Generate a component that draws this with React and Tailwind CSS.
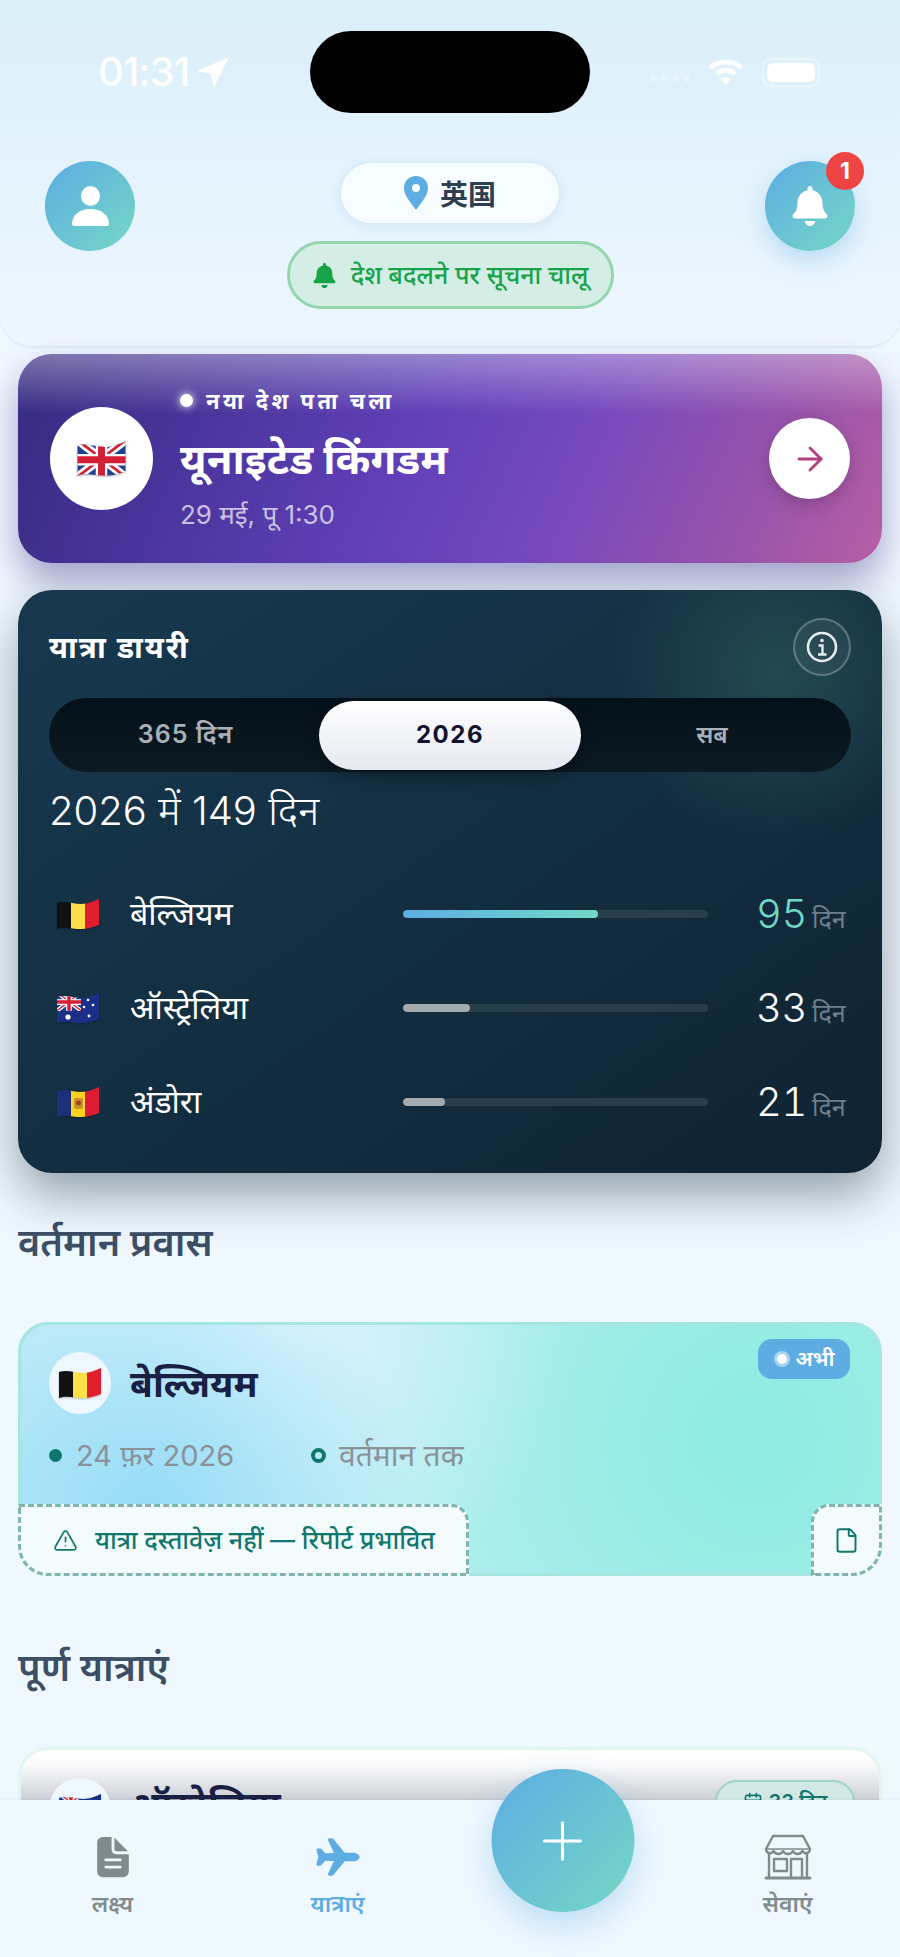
import React from 'react';
import { ArrowRight, TriangleAlert, File, Plus, Calendar } from 'lucide-react';
import { IoDocumentText, IoAirplane } from 'react-icons/io5';
import { FaBell } from 'react-icons/fa';

const WAVE = 'M0 5C8 2 16 6 24 6C31 6 37 3 42 1V27C37 29 31 31 24 31C16 31 8 28 0 31Z';

function Flag({ id, w = 42, h = 32, children }) {
  return (
    <svg width={w} height={h} viewBox="0 0 42 32" className="shrink-0" style={{ filter: 'drop-shadow(0 1px 1px rgba(0,0,0,.25))' }}>
      <defs><clipPath id={id}><path d={WAVE} /></clipPath></defs>
      <g clipPath={`url(#${id})`}>{children}</g>
    </svg>
  );
}
const Belgium = ({ id, w, h }) => (
  <Flag id={id} w={w} h={h}>
    <rect x="0" width="14" height="32" fill="#111" /><rect x="14" width="14" height="32" fill="#fde047" /><rect x="28" width="14" height="32" fill="#e11d2e" />
  </Flag>
);
const Andorra = ({ id, w, h }) => (
  <Flag id={id} w={w} h={h}>
    <rect x="0" width="14" height="32" fill="#1e2f7a" /><rect x="14" width="14" height="32" fill="#fbd21e" /><rect x="28" width="14" height="32" fill="#dd1c34" />
    <rect x="17" y="12" width="9" height="11" rx="2" fill="#c9902e" /><circle cx="21.5" cy="17" r="2.5" fill="#a3431f" />
  </Flag>
);
const UKShapes = () => (
  <>
    <rect width="42" height="32" fill="#1f3f8f" />
    <path d="M0 0L42 32M42 0L0 32" stroke="#fff" strokeWidth="7" />
    <path d="M0 0L42 32M42 0L0 32" stroke="#d31f36" strokeWidth="2.4" />
    <path d="M21 0V32M0 17H42" stroke="#fff" strokeWidth="10" />
    <path d="M21 0V32M0 17H42" stroke="#d31f36" strokeWidth="6" />
  </>
);
const UK = ({ id, w, h }) => <Flag id={id} w={w} h={h}><UKShapes /></Flag>;
const Australia = ({ id, w, h }) => (
  <Flag id={id} w={w} h={h}>
    <rect width="42" height="32" fill="#1c2f87" />
    <svg x="0" y="0" width="24" height="19" viewBox="0 0 42 32"><UKShapes /></svg>
    <circle cx="11" cy="25" r="2.6" fill="#fff" /><circle cx="31" cy="8" r="1.3" fill="#fff" /><circle cx="36" cy="13" r="1.3" fill="#fff" /><circle cx="27" cy="15" r="1.3" fill="#fff" /><circle cx="32" cy="24" r="1.4" fill="#fff" />
  </Flag>
);

const Row = ({ flag, name, fill, val, active }) => (
  <div className="flex items-center h-[94px]">
    <div className="w-[40px] ml-[9px] mr-[32px] flex justify-center">{flag}</div>
    <div className="w-[273px] text-[32px] text-white leading-none">{name}</div>
    <div className="w-[305px] h-[8px] rounded-full bg-[#293e4d] overflow-hidden">
      <div className={active ? 'h-full rounded-full bg-gradient-to-r from-[#5dade2] to-[#72d8c6]' : 'h-full rounded-full bg-[#a3abb1]'} style={{ width: fill }} />
    </div>
    <div className="flex items-baseline ml-[48px]">
      <span className={active ? 'w-[47px] text-[40px] font-light leading-none tabular-nums tracking-[-0.5px] text-[#72d8c6]' : 'w-[47px] text-[40px] font-light leading-none tabular-nums tracking-[-0.5px] text-white'}>{val}</span>
      <span className="ml-[9px] text-[25px] leading-none text-[#6d7f8b]">दिन</span>
    </div>
  </div>
);

const GRAD = 'bg-gradient-to-br from-[#5dade2] to-[#76d7c4]';

export default function App() {
  return (
    <div className="relative w-[900px] h-[1957px] overflow-hidden bg-[#f0f8ff] text-[#2c3e50] [font-family:Inter,'Noto_Sans','Noto_Sans_Devanagari',sans-serif]">
      {/* header */}
      <header className="h-[346px] rounded-b-[32px] bg-gradient-to-b from-[#daeff9] to-[#eff7ff] shadow-[0_1px_3px_rgba(90,110,170,0.15)]">
        <div className="flex items-center pt-[31px] pl-[98px] h-[113px]">
          <div className="flex items-center gap-[8px] w-[212px] text-white">
            <span className="text-[40px] font-medium leading-none tracking-[-1px]">01:31</span>
            <svg width="32" height="30" viewBox="0 0 30 28" fill="#fff" stroke="#fff" strokeWidth="1" strokeLinejoin="round"><path d="M29 1L1 13L13 15L16 27Z" /></svg>
          </div>
          <div className="w-[280px] h-[82px] rounded-[41px] bg-black" />
          <div className="flex items-center w-[230px] justify-end text-white">
            <div className="flex gap-[4px] opacity-30 mt-[12px] mr-[17px]">
              <span className="w-[7px] h-[7px] rounded-full bg-white" /><span className="w-[7px] h-[7px] rounded-full bg-white" /><span className="w-[7px] h-[7px] rounded-full bg-white" /><span className="w-[7px] h-[7px] rounded-full bg-white" />
            </div>
            <svg width="38" height="28" viewBox="0 0 38 28" fill="none" stroke="#fff" strokeWidth="5" className="mr-[17px]"><path d="M3 10C12 2 26 2 35 10" /><path d="M10 16C15 11 23 11 28 16" /><path d="M19 27L14 21C17 19 21 19 24 21Z" fill="#fff" stroke="none" /></svg>
            <div className="w-[58px] h-[29px] rounded-[9px] border-2 border-white/40 p-[3px]">
              <div className="w-full h-full rounded-[6px] bg-white" />
            </div>
          </div>
        </div>
        <div className="flex items-start justify-between px-[45px] mt-[48px]">
          <div className={`w-[90px] h-[90px] rounded-full ${GRAD} flex items-center justify-center`}>
            <svg width="37" height="40" viewBox="0 0 37 40" fill="#fff"><ellipse cx="18.5" cy="10" rx="9.5" ry="10" /><path d="M0 38C0 29 8 23 18.5 23S37 29 37 38c0 1-1 2-2 2H2c-1 0-2-1-2-2z" /></svg>
          </div>
          <div className="flex flex-col items-center gap-[16px]">
            <div className="w-[222px] h-[64px] rounded-full bg-[#f7fcff] border-2 border-[#d9eaf8] shadow-[0_4px_12px_rgba(93,173,226,0.12)] flex items-center justify-center gap-[12px]">
              <svg width="24" height="34" viewBox="0 0 24 34"><path fillRule="evenodd" fill="#5dade2" d="M12 0C5 0 0 5 0 12c0 8 8 16 12 22 4-6 12-14 12-22C24 5 19 0 12 0zm0 8a4 4 0 110 8 4 4 0 010-8z" /></svg>
              <span className="text-[28px] font-semibold text-[#2c3e50] [font-family:'Noto_Sans_CJK_SC',sans-serif]">英国</span>
            </div>
            <div className="w-[327px] h-[68px] rounded-full bg-[#d4eee6] border-[3px] border-[#94d5ae] flex items-center justify-center gap-[14px]">
              <FaBell className="text-[#16a34a] text-[25px]" />
              <span className="text-[25px] font-medium text-[#16a34a] leading-none">देश बदलने पर सूचना चालू</span>
            </div>
          </div>
          <div className={`relative w-[90px] h-[90px] rounded-full ${GRAD} flex items-center justify-center shadow-[0_10px_24px_rgba(93,173,226,0.35)]`}>
            <FaBell className="text-white text-[40px]" />
            <div className="absolute -top-[9px] -right-[9px] w-[38px] h-[38px] rounded-full bg-[#ef4444] text-white text-[23px] font-bold flex items-center justify-center">1</div>
          </div>
        </div>
      </header>

      <main className="px-[18px]">
        {/* detection card */}
        <section className="relative mt-[8px] h-[209px] rounded-[34px] bg-[linear-gradient(115deg,#362a80_0%,#6040b8_45%,#7548be_62%,#9a54aa_85%,#b75fa5_100%)] shadow-[0_18px_36px_rgba(49,46,129,0.42)]">
          <div className="absolute inset-x-0 top-0 h-[60px] rounded-t-[34px] bg-gradient-to-b from-white/35 to-transparent" />
          <div className="relative h-full flex items-center pl-[32px] pr-[32px]">
            <div className="w-[103px] h-[103px] rounded-full bg-white flex items-center justify-center shrink-0"><UK id="f-uk" w={49} h={37} /></div>
            <div className="ml-[27px] flex-1 text-white">
              <div className="flex items-center gap-[13px] text-[22px] font-bold leading-none tracking-[3.5px]">
                <span className="w-[13px] h-[13px] rounded-full bg-white shadow-[0_0_8px_white]" />नया देश पता चला
              </div>
              <div className="text-[42px] font-bold leading-none mt-[26px]">यूनाइटेड किंगडम</div>
              <div className="text-[26px] leading-none mt-[22px] text-white/70">29 मई, पू 1:30</div>
            </div>
            <div className="w-[81px] h-[81px] rounded-full bg-white flex items-center justify-center shadow-[0_6px_16px_rgba(0,0,0,0.18)]">
              <ArrowRight size={38} strokeWidth={1.8} className="text-[#b0407f]" />
            </div>
          </div>
        </section>

        {/* diary card */}
        <section className="relative mt-[27px] h-[583px] rounded-[34px] overflow-hidden px-[31px] bg-[radial-gradient(circle_170px_at_88%_14%,#234a50_0%,rgba(35,74,80,0)_100%),linear-gradient(145deg,#17394f_0%,#0f2333_100%)] shadow-[0_22px_50px_rgba(15,35,51,0.42)]">
          <div className="flex items-center justify-between pt-[28px]">
            <div className="text-[30px] font-bold text-white tracking-[2px] leading-none">यात्रा डायरी</div>
            <div className="w-[58px] h-[58px] rounded-full border-2 border-white/25 bg-white/5 flex items-center justify-center">
              <svg width="32" height="32" viewBox="0 0 32 32" fill="none" stroke="#e6ebee" strokeWidth="2.6"><circle cx="16" cy="16" r="14" /><path d="M12.5 14.5H16.5V23M12 23.5H20.5" strokeWidth="2.4" /><circle cx="16" cy="9.5" r="1.8" fill="#e6ebee" stroke="none" /></svg>
            </div>
          </div>
          <div className="mt-[22px] h-[74px] rounded-full bg-[linear-gradient(180deg,#05111a,#0c1a22)] flex items-center px-[3px] text-center">
            <div className="w-[267px] text-[25px] font-semibold text-[#a9b1b6] tracking-[1px]">365 दिन</div>
            <div className="w-[262px] h-[69px] rounded-full bg-gradient-to-b from-white to-[#e6e9f2] text-[#12122e] text-[24px] font-bold tracking-[1.5px] flex items-center justify-center shadow-[0_6px_18px_rgba(0,0,0,0.35)]">2026</div>
            <div className="flex-1 text-[24px] font-semibold text-[#a9b1b6] pr-[5px]">सब</div>
          </div>
          <div className="mt-[15px] text-[40px] font-light text-white leading-[48px]">2026 में 149 दिन</div>
          <div className="mt-[32px]">
            <Row flag={<Belgium id="f-be1" />} name="बेल्जियम" fill="195px" val="95" active />
            <Row flag={<Australia id="f-au1" />} name="ऑस्ट्रेलिया" fill="67px" val="33" />
            <Row flag={<Andorra id="f-ad1" />} name="अंडोरा" fill="42px" val="21" />
          </div>
        </section>

        <h2 className="mt-[46px] text-[38px] font-semibold leading-[46px] text-[#3d4f66]">वर्तमान प्रवास</h2>

        {/* current trip */}
        <section className="relative mt-[57px] h-[254px] rounded-[30px] border-[3px] border-[#a4e6e0] flex flex-col justify-between bg-[radial-gradient(circle_at_15%_75%,#96dcf7_0%,rgba(150,220,247,0)_36%),radial-gradient(circle_at_30%_0%,#dcf3fd_0%,rgba(220,243,253,0)_45%),radial-gradient(circle_at_85%_45%,#8cebe2_0%,rgba(140,235,226,0)_55%),linear-gradient(100deg,#c2ecf8_0%,#aef0ea_100%)]">
          <div className="relative px-[28px] pt-[27px]">
            <div className="flex items-center gap-[19px]">
              <div className="w-[62px] h-[62px] rounded-full bg-[#f0f8ff] flex items-center justify-center"><Belgium id="f-be2" w={42} h={32} /></div>
              <div className="text-[37px] font-bold text-[#1a1f44] leading-none">बेल्जियम</div>
            </div>
            <div className="flex items-center mt-[26px] text-[29px] leading-none text-[#8a9298]">
              <span className="w-[13px] h-[13px] rounded-full bg-[#0f766e] mr-[14px]" />
              <span className="w-[235px]">24 फ़र 2026</span>
              <span className="w-[15px] h-[15px] rounded-full border-[4px] border-[#0f766e] mr-[13px]" />
              <span className="text-[30px]">वर्तमान तक</span>
            </div>
            <div className="absolute top-[14px] right-[29px] w-[92px] h-[40px] rounded-[14px] bg-[#5dade2] flex items-center justify-center gap-[6px] text-white text-[21px] font-semibold">
              <span className="w-[16px] h-[16px] rounded-full bg-white border-[3px] border-[#a8d2f2]" />अभी
            </div>
          </div>
          <div className="flex justify-between items-stretch h-[72px] -mx-[3px] -mb-[3px]">
            <div className="w-[451px] bg-[#f3fbfd] border-[3px] border-dashed border-[#7fb5ae] rounded-tr-[18px] rounded-bl-[30px] flex items-center pl-[32px] gap-[17px] text-[#0f766e]">
              <TriangleAlert size={25} strokeWidth={1.6} />
              <span className="text-[25px] font-medium leading-none">यात्रा दस्तावेज़ नहीं — रिपोर्ट प्रभावित</span>
            </div>
            <div className="w-[71px] bg-[#f3fbfd] border-[3px] border-dashed border-[#7fb5ae] rounded-tl-[18px] rounded-br-[30px] flex items-center justify-center text-[#0f766e]">
              <File size={27} strokeWidth={1.7} />
            </div>
          </div>
        </section>

        <h2 className="mt-[68px] text-[38px] font-semibold leading-[46px] text-[#3d4f66]">पूर्ण यात्राएं</h2>

        {/* completed trip */}
        <section className="relative mt-[57px] h-[200px] rounded-[30px] border-[3px] border-[#e2f5f3] px-[28px] pt-[28px] bg-[linear-gradient(180deg,#ffffff_0px,#fbfbfc_15px,#c8ccd2_52px)]">
          <div className="flex items-center gap-[19px]">
            <div className="w-[62px] h-[62px] rounded-full bg-[#f0f8ff] flex items-center justify-center"><Australia id="f-au2" w={42} h={32} /></div>
            <div className="text-[37px] font-bold text-[#1a1f44] leading-none pb-[10px]">ऑस्ट्रेलिया</div>
          </div>
          <div className="absolute top-[30px] right-[24px] w-[140px] h-[44px] rounded-[22px] bg-[#d2e8e4] border-2 border-[#9fd3cb] flex items-center justify-center gap-[6px] text-[#0f766e] text-[20px] font-semibold">
            <Calendar size={20} />33 दिन
          </div>
        </section>
      </main>

      {/* bottom nav */}
      <nav className="absolute left-0 right-0 bottom-0 h-[157px] bg-[#f0f8ff] grid grid-cols-4 pt-[34px] shadow-[0_-1px_2px_rgba(40,60,90,0.05)]">
        <div className="flex flex-col items-center text-[#7f8c8d]">
          <IoDocumentText className="text-[46px] h-[46px]" />
          <span className="mt-[10px] text-[23px] font-semibold leading-[28px]">लक्ष्य</span>
        </div>
        <div className="flex flex-col items-center text-[#5dade2]">
          <IoAirplane className="text-[48px] h-[46px]" />
          <span className="mt-[10px] text-[23px] font-semibold leading-[28px]">यात्राएं</span>
        </div>
        <div className="relative">
          <div className={`absolute left-1/2 -translate-x-1/2 -top-[65px] w-[143px] h-[143px] rounded-full ${GRAD} flex items-center justify-center shadow-[0_14px_34px_rgba(93,173,226,0.35)]`}>
            <Plus size={62} strokeWidth={1.2} className="text-white" />
          </div>
        </div>
        <div className="flex flex-col items-center text-[#7f8c8d]">
          <svg width="48" height="46" viewBox="0 0 48 46" fill="none" stroke="#7f8c8d" strokeWidth="2.4" strokeLinejoin="round">
            <path d="M9 2H39L46 15C46 19 41 21 38.5 17C36 21 31 21 29 17C27 21 21 21 19 17C17 21 12 21 9.5 17C7 21 2 19 2 15Z" />
            <path d="M5 20V43M43 20V43" />
            <path d="M2 15H46" strokeWidth="1.6" />
            <rect x="10" y="25" width="13" height="12" />
            <path d="M27 43V25H38V43" />
            <path d="M2 44H46" strokeWidth="3" strokeLinecap="round" />
          </svg>
          <span className="mt-[10px] text-[23px] font-semibold leading-[28px]">सेवाएं</span>
        </div>
      </nav>
    </div>
  );
}
